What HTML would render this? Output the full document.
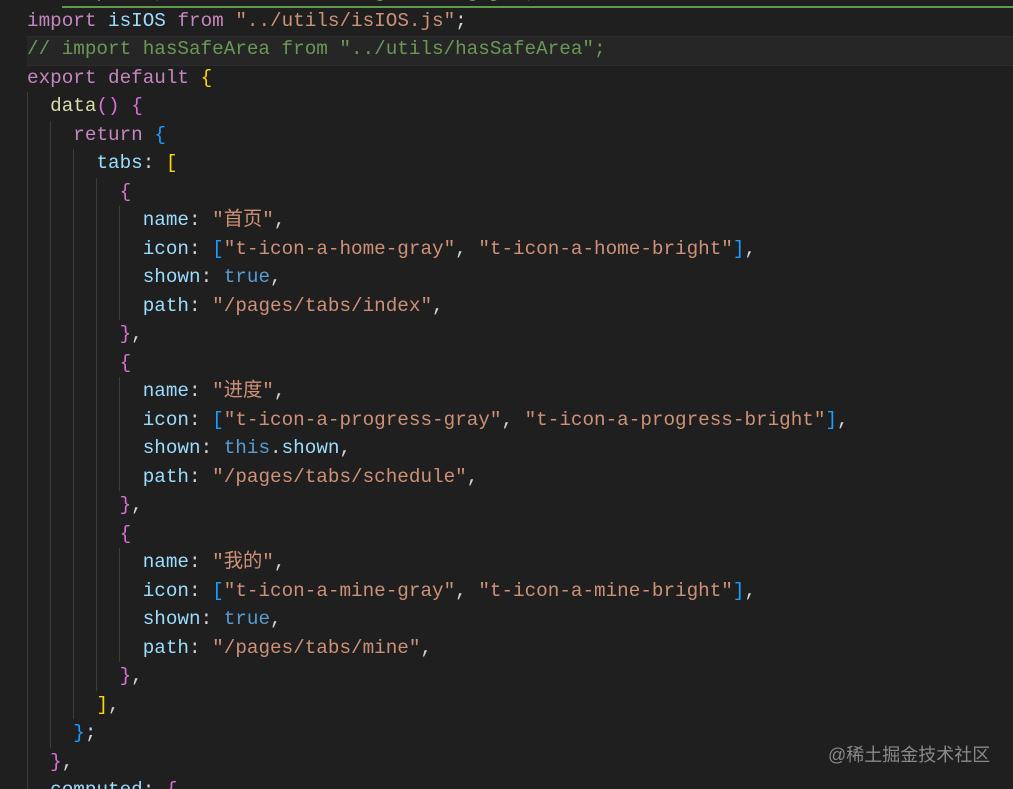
<!DOCTYPE html>
<html><head><meta charset="utf-8"><style>
html,body{margin:0;padding:0;background:#1f1f1f;width:1013px;height:789px;overflow:hidden;position:relative}
.l{position:absolute;left:27px;height:28.5px;line-height:28.5px;white-space:pre;font-family:"Liberation Mono","Noto Sans CJK SC",monospace;font-size:19.3px;color:#d4d4d4}
.g{position:absolute;width:1px;background:#3c3c3c}
.k{color:#c586c0}.v{color:#9cdcfe}.s{color:#ce9178}.c{color:#6a9955}.b{color:#569cd6}.f{color:#dcdcaa}
.y{color:#ffd700}.p{color:#da70d6}.u{color:#179fff}
#hl{position:absolute;left:27px;right:0;top:36px;height:28px;background:#262626;border-top:1px solid #2c2c2c;border-bottom:1px solid #2c2c2c}
#wm{position:absolute;left:828px;top:741px;font-family:"Liberation Sans","Noto Sans CJK SC",sans-serif;font-size:18px;color:#8a8a8a}
</style></head><body>
<div id="hl"></div>
<div style="position:absolute;left:62px;right:0;top:6px;height:2px;background:#5f9a4e"></div>
<div class="g" style="left:27px;top:92px;height:697px"></div>
<div class="g" style="left:50px;top:121px;height:627px"></div>
<div class="g" style="left:73px;top:149px;height:570px"></div>
<div class="g" style="left:96px;top:178px;height:513px"></div>
<div class="g" style="left:119px;top:206px;height:114px"></div>
<div class="g" style="left:119px;top:377px;height:114px"></div>
<div class="g" style="left:119px;top:548px;height:114px"></div>
<div class="l c" style="top:-21.75px">//  import ,  from  "../utils/getConfig.js";</div>
<div class="l" style="top:6.75px"><span class="k">import</span> <span class="v">isIOS</span> <span class="k">from</span> <span class="s">"../utils/isIOS.js"</span>;</div>
<div class="l c" style="top:35.25px">// import hasSafeArea from "../utils/hasSafeArea";</div>
<div class="l" style="top:63.75px"><span class="k">export default</span> <span class="y">{</span></div>
<div class="l" style="top:92.25px">  <span class="f">data</span><span class="p">()</span> <span class="p">{</span></div>
<div class="l" style="top:120.75px">    <span class="k">return</span> <span class="u">{</span></div>
<div class="l" style="top:149.25px">      <span class="v">tabs</span>: <span class="y">[</span></div>
<div class="l" style="top:177.75px">        <span class="p">{</span></div>
<div class="l" style="top:206.25px">          <span class="v">name</span>: <span class="s">"首页"</span>,</div>
<div class="l" style="top:234.75px">          <span class="v">icon</span>: <span class="u">[</span><span class="s">"t-icon-a-home-gray"</span>, <span class="s">"t-icon-a-home-bright"</span><span class="u">]</span>,</div>
<div class="l" style="top:263.25px">          <span class="v">shown</span>: <span class="b">true</span>,</div>
<div class="l" style="top:291.75px">          <span class="v">path</span>: <span class="s">"/pages/tabs/index"</span>,</div>
<div class="l" style="top:320.25px">        <span class="p">}</span>,</div>
<div class="l" style="top:348.75px">        <span class="p">{</span></div>
<div class="l" style="top:377.25px">          <span class="v">name</span>: <span class="s">"进度"</span>,</div>
<div class="l" style="top:405.75px">          <span class="v">icon</span>: <span class="u">[</span><span class="s">"t-icon-a-progress-gray"</span>, <span class="s">"t-icon-a-progress-bright"</span><span class="u">]</span>,</div>
<div class="l" style="top:434.25px">          <span class="v">shown</span>: <span class="b">this</span>.<span class="v">shown</span>,</div>
<div class="l" style="top:462.75px">          <span class="v">path</span>: <span class="s">"/pages/tabs/schedule"</span>,</div>
<div class="l" style="top:491.25px">        <span class="p">}</span>,</div>
<div class="l" style="top:519.75px">        <span class="p">{</span></div>
<div class="l" style="top:548.25px">          <span class="v">name</span>: <span class="s">"我的"</span>,</div>
<div class="l" style="top:576.75px">          <span class="v">icon</span>: <span class="u">[</span><span class="s">"t-icon-a-mine-gray"</span>, <span class="s">"t-icon-a-mine-bright"</span><span class="u">]</span>,</div>
<div class="l" style="top:605.25px">          <span class="v">shown</span>: <span class="b">true</span>,</div>
<div class="l" style="top:633.75px">          <span class="v">path</span>: <span class="s">"/pages/tabs/mine"</span>,</div>
<div class="l" style="top:662.25px">        <span class="p">}</span>,</div>
<div class="l" style="top:690.75px">      <span class="y">]</span>,</div>
<div class="l" style="top:719.25px">    <span class="u">}</span>;</div>
<div class="l" style="top:747.75px">  <span class="p">}</span>,</div>
<div class="l" style="top:776.25px">  <span class="v">computed</span>: <span class="p">{</span></div>
<div id="wm">@稀土掘金技术社区</div>
</body></html>
